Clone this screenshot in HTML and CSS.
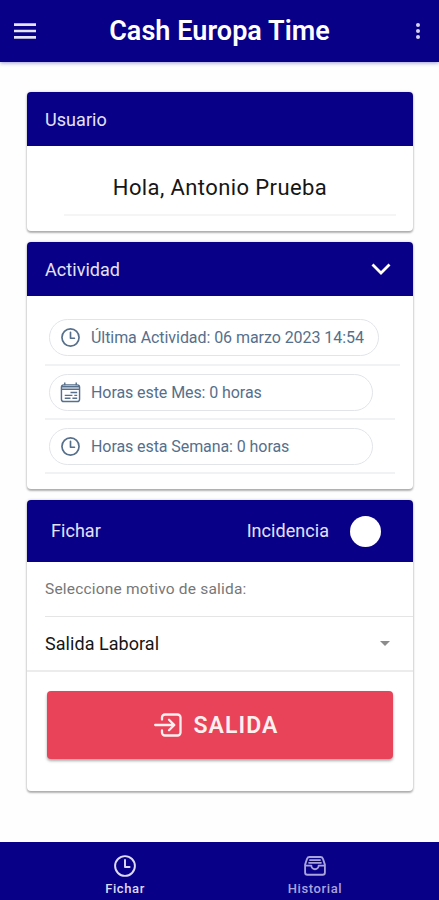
FILE: index.html
```html
<!DOCTYPE html>
<html lang="es">
<head>
<meta charset="utf-8">
<meta name="viewport" content="width=device-width">
<title>Cash Europa Time</title>
<link rel="stylesheet" href="styles.css">
</head>
<body>
<svg width="0" height="0" class="defs">
  <symbol id="clock" viewBox="0 0 24 24" fill="none" stroke="currentColor" stroke-width="2.1" stroke-linecap="round" stroke-linejoin="round"><circle cx="12" cy="12" r="10.8"/><path d="M12 5.5v7.5h5"/></symbol>
</svg>
<header class="toolbar">
  <svg class="menu" viewBox="0 0 22 16" fill="none" stroke="currentColor" stroke-width="2.7"><path d="M0 1.6h22M0 8h22M0 14.4h22"/></svg>
  <h1>Cash Europa Time</h1>
  <svg class="more" viewBox="0 0 6 16" fill="currentColor"><circle cx="3" cy="2" r="2"/><circle cx="3" cy="8" r="2"/><circle cx="3" cy="14" r="2"/></svg>
</header>
<main>
  <section class="card user">
    <div class="card-head"><span>Usuario</span></div>
    <p class="greeting">Hola, Antonio Prueba</p>
  </section>
  <section class="card activity">
    <div class="card-head"><span>Actividad</span>
      <svg class="chevron" viewBox="0 0 20 12" fill="none" stroke="currentColor" stroke-width="2.8"><path d="M1.5 1.5 10 10l8.5-8.5"/></svg>
    </div>
    <div class="row first"><div class="pill wide"><svg class="ic"><use href="#clock"/></svg><span>Última Actividad: 06 marzo 2023 14:54</span></div></div>
    <div class="row"><div class="pill"><svg class="ic cal" viewBox="0 0 22 22" fill="none" stroke="currentColor" stroke-width="1.5"><rect x="1.5" y="3" width="19" height="17.5" rx="2.5"/><path d="M1.5 7.5h19M1.5 5h19M5 .5v3M17 .5v3M11 11h7M5 14h8M15 14h3M5 17h6M13 17h5"/></svg><span>Horas este Mes: 0 horas</span></div></div>
    <div class="row"><div class="pill"><svg class="ic"><use href="#clock"/></svg><span>Horas esta Semana: 0 horas</span></div></div>
  </section>
  <section class="card clocking">
    <div class="card-head"><span>Fichar</span><span class="incident">Incidencia</span><i class="knob"></i></div>
    <div class="reason">Seleccione motivo de salida:</div>
    <div class="select"><span>Salida Laboral</span><i class="caret"></i></div>
    <button class="exit">
      <svg viewBox="0 0 28 24" fill="none" stroke="currentColor" stroke-width="2.3" stroke-linecap="round" stroke-linejoin="round"><path d="M8 6.5V4.5A3 3 0 0 1 11 1.5H23.5A3 3 0 0 1 26.5 4.5V19.5A3 3 0 0 1 23.5 22.5H11A3 3 0 0 1 8 19.5V17.5M1.2 12H20M15 6.7 20.3 12 15 17.3"/></svg>
      <span>SALIDA</span>
    </button>
  </section>
</main>
<nav class="tabs">
  <a class="tab active"><svg><use href="#clock"/></svg><span>Fichar</span></a>
  <a class="tab"><svg class="tray" viewBox="0 0 24 22" fill="none" stroke="currentColor" stroke-width="2" stroke-linejoin="round" stroke-linecap="round"><path d="M1.2 9.5 3.3 3.2Q4 1.2 6 1.2H18Q20 1.2 20.7 3.2L22.8 9.5V18A2.5 2.5 0 0 1 20.3 20.5H3.7A2.5 2.5 0 0 1 1.2 18ZM1.2 10.5H8A4 4 0 0 0 16 10.5H22.8M6.5 4.5H17.5M5.5 7.5H18.5"/></svg><span>Historial</span></a>
</nav>
</body>
</html>
```
FILE: styles.css
```css
* { box-sizing: border-box; }
body { margin: 0; height: 900px; display: flex; flex-direction: column; background: #fefefe; font-family: Roboto, sans-serif; color: #161616; overflow: hidden; }
.defs { display: block; position: absolute; }
svg { display: block; flex: none; overflow: visible; }
span { white-space: nowrap; }

.toolbar { height: 62px; flex: none; padding: 0 18px 0 14px; display: flex; align-items: center; background: #080087; color: #fff; box-shadow: 0 1px 4px #08008766; }
.menu { width: 22px; height: 16px; color: #e4e2f5; }
.more { width: 6px; height: 16px; color: #d6d3ef; }
h1 { flex: 1; margin: 0 12px 0 0; text-align: center; font-size: 27px; font-weight: 600; line-height: 32px; letter-spacing: .05px; }

main { flex: 1; padding: 30px 26px 0 27px; display: flex; flex-direction: column; gap: 11px; }
.card { border-radius: 4px; background: #fff; overflow: hidden; box-shadow: 0 2px 2px #0004, 0 0 3px #0003; }
.card-head { height: 54px; padding: 0 22px 0 18px; display: flex; align-items: center; justify-content: space-between; background: #080087; color: #e4e2f6; font-size: 18px; letter-spacing: .05px; }

.user { height: 139px; }
.greeting { margin: 0 17px 0 37px; height: 70px; padding: 14px 20px 0 0; text-align: center; border-bottom: 2px solid #f5f5f6; font-size: 22px; line-height: 56px; letter-spacing: .4px; }

.activity { height: 247px; }
.chevron { width: 20px; height: 12px; color: #fff; }
.row { height: 54px; margin: 0 18px; padding: 8px 0 0 4px; border-bottom: 2px solid #f1f2f3; }
.row.first { height: 70px; margin-right: 13px; padding-top: 23px; }
.pill { width: 324px; height: 37px; border: 1px solid #e1e4e8; border-radius: 19px; display: flex; align-items: center; padding-left: 10px; gap: 10px; color: #566f8b; font-size: 16px; letter-spacing: -.08px; }
.pill.wide { width: 330px; letter-spacing: -.06px; }
.ic { width: 19px; height: 19px; margin: 0 1px; }
.cal { width: 21px; height: 21px; margin: 0; }

.clocking { height: 291px; }
.clocking .card-head { height: 62px; padding: 0 32px 0 24px; }
.clocking .card-head span { padding-bottom: 1px; }
.incident { margin-left: auto; }
.knob { width: 31px; height: 31px; margin-left: 21px; border-radius: 50%; background: #fff; }
.reason { height: 55px; margin-left: 18px; line-height: 55px; border-bottom: 1px solid #e5e5e6; font-size: 15.5px; letter-spacing: .2px; color: #777; }
.select { height: 55px; padding: 0 23px 0 18px; display: flex; align-items: center; justify-content: space-between; border-bottom: 2px solid #ececec; font-size: 18px; letter-spacing: .05px; }
.caret { border: 5px solid transparent; border-top-color: #8c8c8c; border-bottom: 0; }
.exit { display: flex; align-items: center; justify-content: center; gap: 11px; width: 346px; height: 68px; margin: 19px 0 0 20px; padding: 0 7px 0 0; border: 0; border-radius: 4px; background: #e9435a; color: #fff0f0; font: 600 23px/28px Roboto, sans-serif; letter-spacing: 1.1px; box-shadow: 0 2px 3px #0005; }
.exit svg { width: 28px; height: 24px; }
.exit span { padding-top: 1px; }

.tabs { height: 58px; flex: none; display: grid; grid-template-columns: 190px 190px; padding-left: 30px; background: #080087; }
.tab { display: flex; flex-direction: column; align-items: center; padding-top: 13px; gap: 4px; color: #a9a5dc; font-size: 13px; line-height: 15px; font-weight: 500; letter-spacing: .6px; }
.tab svg { width: 22px; height: 22px; }
.active { color: #dedbf6; }
```
